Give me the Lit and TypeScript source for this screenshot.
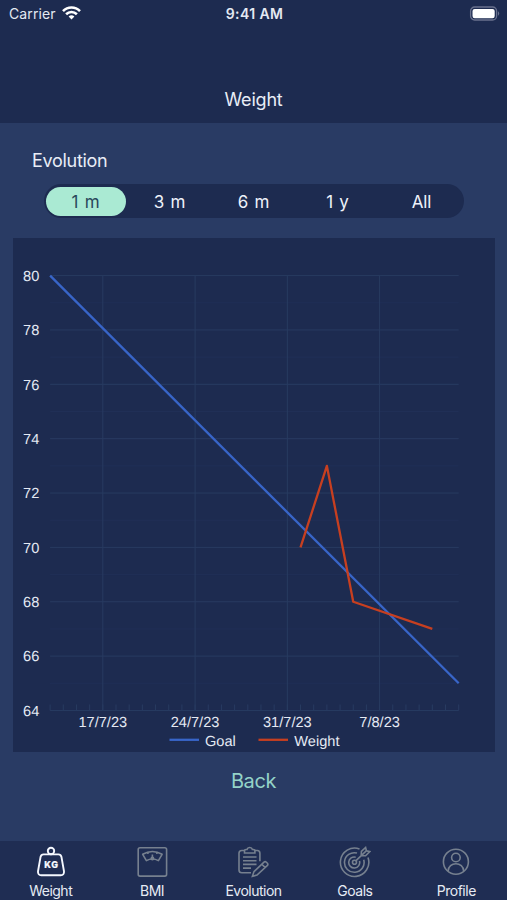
import { LitElement, html, svg, css } from "lit";
import { customElement, property, state } from "lit/decorators.js";
import { classMap } from "lit/directives/class-map.js";

@customElement("status-bar")
class StatusBar extends LitElement {
  static styles = css`
    :host { display: grid; grid-template-columns: 1fr auto 1fr; align-items: center; height: 27px; padding: 0 7px 0 9px; font: 14px/27px Inter, sans-serif; color: #e4e9f2; }
    .carrier { display: flex; align-items: center; gap: 6px; letter-spacing: 0.1px; }
    .time { font-size: 14px; font-weight: 600; letter-spacing: 0.4px; }
    .power { display: flex; justify-content: flex-end; }
    svg { display: block; }
    .wifi { margin-top: -2px; }
  `;
  render() {
    return html`
      <div class="carrier"><span>Carrier</span>
        <svg class="wifi" width="19" height="14" viewBox="0 0 19 14" fill="none" stroke="#fff" stroke-width="2.6">
          <path d="M1 5.1C5.8.3 13.2.3 18 5.1"/><path d="M4.1 8.3c3.1-3 7.700-3 10.800 0"/>
          <path d="M6.600 10.600Q9.500 8 12.400 10.600L9.500 13.600Z" fill="#fff" stroke="none"/>
        </svg>
      </div>
      <div class="time">9:41 AM</div>
      <div class="power">
        <svg width="31" height="16" viewBox="0 0 31 16">
          <rect x="1.600" y="1" width="26" height="13" rx="4" fill="none" stroke="#69718d" stroke-width="1.300"/>
          <rect x="3.500" y="2.900" width="22.200" height="9.300" rx="2.200" fill="#fff"/>
          <path d="M29 5.200q2.400 2.200 0 4.500z" fill="#69718d"/>
        </svg>
      </div>`;
  }
}

@customElement("range-picker")
class RangePicker extends LitElement {
  @state() private selected = "1 m";
  static styles = css`
    :host { display: grid; grid-template-columns: repeat(5, 1fr); width: 420px; height: 34px; box-sizing: border-box; border-radius: 17px; background: #1d2b50; }
    button { border: 0; margin: 2.500px 2px; padding: 1px 0 0; border-radius: 15px; background: none; font: 17px/28px Inter, sans-serif; letter-spacing: -0.200px; word-spacing: 1.800px; color: #eef2fa; }
    .active { background: #aaead3; color: #29475b; }
  `;
  render() {
    return ["1 m", "3 m", "6 m", "1 y", "All"].map(
      (r) => html`<button class=${classMap({ active: r === this.selected })} @click=${() => (this.selected = r)}>${r}</button>`
    );
  }
}

const X0 = 37.1;
const DAY = 13.18;
const Y0 = 37.6;
const UNIT = 27.18;
const px = (day: number) => X0 + day * DAY;
const py = (kg: number) => Y0 + (80 - kg) * UNIT;
const points = (data: number[][]) => data.map(([d, kg]) => `${px(d)},${py(kg)}`).join(" ");
const GOAL = [[0, 80], [31, 65]];
const WEIGHT = [[19, 70], [21, 73], [23, 68], [29, 67]];
const DATES: [number, string][] = [[4, "17/7/23"], [11, "24/7/23"], [18, "31/7/23"], [25, "7/8/23"]];

@customElement("weight-chart")
class WeightChart extends LitElement {
  static styles = css`
    :host { display: block; width: 482px; height: 514px; background: #1d2b50; }
    svg { display: block; }
    text { font: 14.600px "Liberation Sans", Arial, sans-serif; fill: #e4e9f3; text-rendering: geometricPrecision; }
    .major { stroke: #283b61; }
    .minor { stroke: #202f56; }
    .series { fill: none; stroke-width: 2.300; stroke-linejoin: round; }
    .goal { stroke: #3865c8; }
    .weight { stroke: #c73f20; }
  `;
  render() {
    const rows = [80, 78, 76, 74, 72, 70, 68, 66, 64];
    return html`<svg width="482" height="514" viewBox="0 0 482 514">
      ${rows.slice(1).map((v) => svg`<line class="minor" x1=${px(0)} x2=${px(31)} y1=${py(v + 1)} y2=${py(v + 1)}/>`)}
      ${rows.map((v) => svg`<line class="major" x1=${px(0)} x2=${px(31)} y1=${py(v)} y2=${py(v)}/>
        <text x="26.300" y=${py(v) + 5.2} text-anchor="end">${v}</text>`)}
      ${Array.from({ length: 32 }, (_, d) => svg`<line class="major" x1=${px(d)} x2=${px(d)} y1=${py(64) - 6} y2=${py(64)}/>`)}
      ${DATES.map(([d, label]) => svg`<line class="major" x1=${px(d)} x2=${px(d)} y1=${py(80)} y2=${py(64)}/>
        <text x=${px(d)} y="489.200" text-anchor="middle">${label}</text>`)}
      <polyline class="series goal" points=${points(GOAL)}/>
      <polyline class="series weight" points=${points(WEIGHT)}/>
      <line class="series goal" x1="156.500" x2="186" y1="501.800" y2="501.800"/>
      <text x="192" y="507.500">Goal</text>
      <line class="series weight" x1="245.500" x2="275" y1="501.800" y2="501.800"/>
      <text x="281.300" y="507.500">Weight</text>
    </svg>`;
  }
}

const ICONS = {
  weight: svg`<g stroke-width="1.900"><circle cx="16" cy="5" r="3.200"/><path d="M8.500 8.400h15q2.300 0 2.900 2.300l2.600 14.700q.3 3.800-3.300 3.800H6.300q-3.600 0-3.300-3.800L5.600 10.700q.6-2.300 2.900-2.300Z"/></g>
    <text x="16.400" y="22.200" text-anchor="middle" class="kg">KG</text>`,
  bmi: svg`<rect x="2.200" y="1.700" width="28.400" height="28.400" rx="1.800"/><path d="M6.700 8.300Q16.400 2.700 26.100 8.300L22.400 14.600Q16.400 11.500 10.400 14.600Z" stroke-linejoin="round"/><path d="M16.400 12.500V8.500M11.900 6v2M20.900 6v2"/><circle cx="16.400" cy="12.600" r="1.200"/>`,
  evolution: svg`<path d="M7.500 4.500H4.800Q2 4.500 2 7.300v16.800Q2 26.800 4.800 26.800H14M18 4.500h2.300q2.600 0 2.600 2.800v8"/><path d="M7.500 7V4.700Q7.500 3.500 9 3.500h1Q10.500 1.500 12.700 1.500t2.700 2h1q1.500 0 1.500 1.200V7Z"/><path d="M6 11h13.500M6 14.700h13.500M6 18.400h13.500M6 22.100h8"/><path d="m17 25.600 10-9.500q1.200-1 2.400.2l1 1q1 1.200-.2 2.300L20 29.100l-4.600 1.200ZM24.800 18.200l3.200 3.200"/>`,
  goals: svg`<path d="M20.500 2.900A14.200 14.200 0 1 0 29 11.500M18 7.100A9.800 9.800 0 1 0 24.700 13.800M16.700 11.200A5.500 5.500 0 1 0 20.500 15"/><circle cx="15.500" cy="16.200" r="2"/><path d="m16.500 15.200 11-10.500M22.200 9.700l.2-4.300L26.600 1.500l.8 3.300 3.400.8-4.200 4.100Z"/>`,
  profile: svg`<circle cx="15.900" cy="15.700" r="12.500"/><circle cx="15.900" cy="11.500" r="4.300"/><path d="M8.100 25.200c0-10 15.600-10 15.600 0"/>`,
};

@customElement("tab-item")
class TabItem extends LitElement {
  @property() label = "";
  @property() icon: keyof typeof ICONS = "weight";
  @property({ type: Boolean, reflect: true }) active = false;
  static styles = css`
    :host { display: flex; flex-direction: column; align-items: center; padding-top: 5px; color: #76808f; }
    :host([active]) { color: #f5f8ff; }
    svg { display: block; fill: none; stroke: currentColor; stroke-width: 1.600; }
    .kg { font: 800 9px Inter, sans-serif; letter-spacing: 0.600px; fill: currentColor; stroke: currentColor; stroke-width: 0.200; }
    .label { font: 14px/20px Inter, sans-serif; letter-spacing: -0.500px; color: #e6ebf4; margin-top: 3px; white-space: nowrap; }
  `;
  render() {
    return html`<svg width="32" height="32" viewBox="0 0 32 32">${ICONS[this.icon]}</svg><span class="label">${this.label}</span>`;
  }
}

@customElement("app-root")
class AppRoot extends LitElement {
  static styles = css`
    :host { display: flex; flex-direction: column; height: 900px; background: #293b64; font-family: Inter, sans-serif; }
    header { height: 123px; background: #1d2b50; }
    h1 { margin: 61px 0 0; text-align: center; font-size: 18px; line-height: 24px; font-weight: 400; letter-spacing: -0.200px; color: #e8edf6; }
    main { flex: 1; display: flex; flex-direction: column; align-items: center; }
    h2 { align-self: flex-start; margin: 26px 0 11px 32px; font-size: 18px; line-height: 24px; font-weight: 400; letter-spacing: -0.300px; color: #e8edf6; }
    weight-chart { margin-top: 20px; }
    .back { margin-top: 15px; border: 0; padding: 0; background: none; font: 20px/29px Inter, sans-serif; letter-spacing: -0.400px; color: #94d3c8; }
    nav { height: 59px; display: grid; grid-template-columns: repeat(5, 1fr); background: #1f2d53; }
  `;
  render() {
    return html`
      <header><status-bar></status-bar><h1>Weight</h1></header>
      <main>
        <h2>Evolution</h2>
        <range-picker></range-picker>
        <weight-chart></weight-chart>
        <button class="back">Back</button>
      </main>
      <nav>
        <tab-item active icon="weight" label="Weight"></tab-item>
        <tab-item icon="bmi" label="BMI"></tab-item>
        <tab-item icon="evolution" label="Evolution"></tab-item>
        <tab-item icon="goals" label="Goals"></tab-item>
        <tab-item icon="profile" label="Profile"></tab-item>
      </nav>`;
  }
}
